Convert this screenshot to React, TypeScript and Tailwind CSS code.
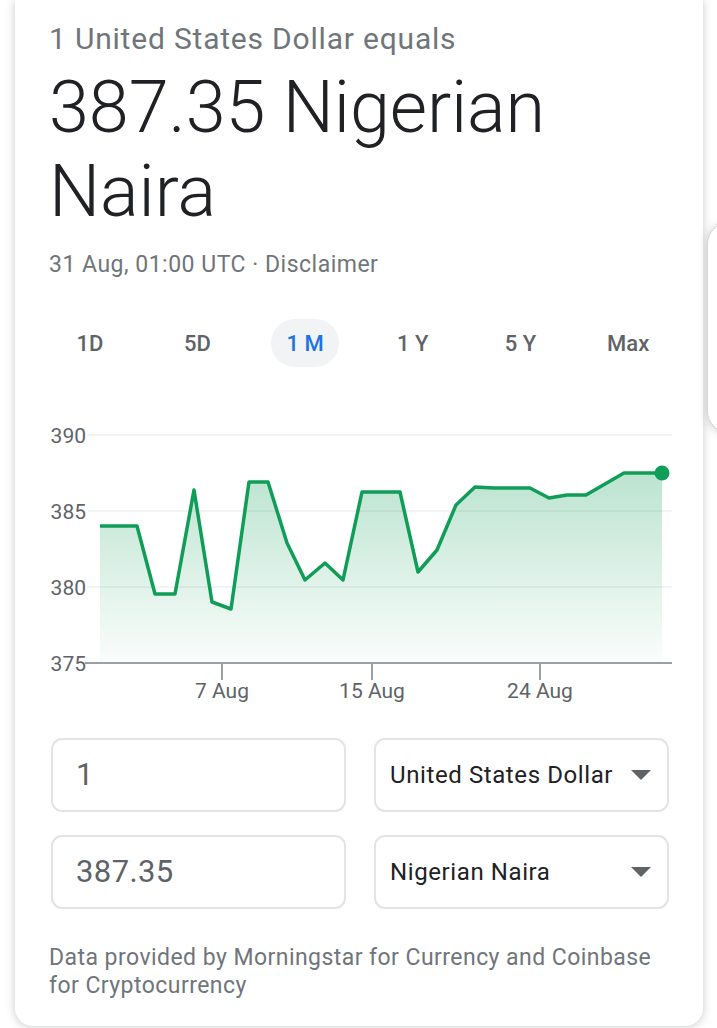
import React from "react";

const ranges = ["1D", "5D", "1 M", "1 Y", "5 Y", "Max"];

const points: [number, number][] = [
  [100, 526], [137, 526], [155, 594], [175, 594], [194, 490], [212, 602],
  [231, 609], [249, 482], [268, 482], [287, 543], [305, 580], [325, 563],
  [343, 580], [362, 492], [400, 492], [418, 572], [437, 550], [456, 505],
  [475, 487], [494, 488], [530, 488], [549, 498], [567, 495], [586, 495],
  [624, 473], [662, 473],
];

function Chart() {
  const line = points.map((p) => p.join(",")).join(" ");
  const area = `${line} 662,663 100,663`;
  return (
    <svg width="688" height="300" viewBox="15 410 688 300" className="block">
      <defs>
        <linearGradient id="fill" x1="0" y1="0" x2="0" y2="1">
          <stop offset="0%" stopColor="#0f9d58" stopOpacity="0.28" />
          <stop offset="100%" stopColor="#0f9d58" stopOpacity="0.02" />
        </linearGradient>
      </defs>
      {[435, 511, 587].map((y) => (
        <line key={y} x1="88" x2="672" y1={y} y2={y} stroke="#f1f3f4" strokeWidth="2" />
      ))}
      <polygon points={area} fill="url(#fill)" />
      <polyline points={line} fill="none" stroke="#0f9d58" strokeWidth="3.5" strokeLinejoin="round" />
      <circle cx="662" cy="473" r="7.5" fill="#0f9d58" />
      <line x1="85" x2="672" y1="663" y2="663" stroke="#9aa0a6" strokeWidth="2" />
      {[222, 372, 540].map((x) => (
        <line key={x} x1={x} x2={x} y1="663" y2="680" stroke="#9aa0a6" strokeWidth="2" />
      ))}
      <g fontFamily="Roboto, sans-serif" fontSize="21" fill="#5f6368">
        <text x="86" y="443" textAnchor="end">390</text>
        <text x="86" y="519" textAnchor="end">385</text>
        <text x="86" y="595" textAnchor="end">380</text>
        <text x="86" y="671" textAnchor="end">375</text>
        <text x="222" y="698" textAnchor="middle">7 Aug</text>
        <text x="372" y="698" textAnchor="middle">15 Aug</text>
        <text x="540" y="698" textAnchor="middle">24 Aug</text>
      </g>
    </svg>
  );
}

function Caret() {
  return (
    <svg width="20" height="10" viewBox="0 0 20 10">
      <polygon points="0,0 20,0 10,10" fill="#5f6368" />
    </svg>
  );
}

export default function App() {
  return (
    <div className="w-[717px] h-[1028px] overflow-hidden bg-white flex items-start font-['Roboto',sans-serif]">
      <div className="shrink-0 w-[688px] h-[1026px] ml-[15px] bg-white rounded-b-[18px] shadow-[0_1px_10px_rgba(60,64,67,0.28)]">
        <div className="pl-[34px] pr-[30px] pt-[20px]">
          <div className="text-[30px] leading-[37px] tracking-[0.8px] text-[#70757a]">1 United States Dollar equals</div>
          <div className="mt-[9px] text-[72px] leading-[84px] tracking-[-0.1px] font-light text-[#202124]">
            387.35 Nigerian Naira
          </div>
          <div className="mt-[17px] text-[23px] leading-[28px] tracking-[0.5px] text-[#70757a]">
            31 Aug, 01:00 UTC · Disclaimer
          </div>
        </div>

        <div className="mt-[40px] px-[21px] grid grid-cols-6">
          {ranges.map((r) => (
            <div key={r} className="flex justify-center">
              <div
                className={
                  r === "1 M"
                    ? "h-[48px] w-[68px] rounded-full bg-[#f1f3f4] flex items-center justify-center text-[22px] font-medium text-[#1a73e8]"
                    : "h-[48px] w-[68px] flex items-center justify-center text-[22px] font-medium text-[#5f6368]"
                }
              >
                {r}
              </div>
            </div>
          ))}
        </div>

        <div className="mt-[43px]">
          <Chart />
        </div>

        <div className="mt-[28px] pl-[36px] pr-[34px] grid grid-cols-2 gap-x-[28px] gap-y-[23px]">
          <div className="h-[74px] rounded-[11px] border-2 border-[#e3e4e6] flex items-center pl-[23px] text-[31px] tracking-[0.4px] text-[#5f6368]">
            1
          </div>
          <div className="h-[74px] rounded-[11px] border-2 border-[#e3e4e6] flex items-center justify-between pl-[14px] pr-[16px] text-[24px] tracking-[0.6px] text-[#202124]">
            <span>United States Dollar</span>
            <Caret />
          </div>
          <div className="h-[74px] rounded-[11px] border-2 border-[#e3e4e6] flex items-center pl-[23px] text-[31px] tracking-[0.4px] text-[#5f6368]">
            387.35
          </div>
          <div className="h-[74px] rounded-[11px] border-2 border-[#e3e4e6] flex items-center justify-between pl-[14px] pr-[16px] text-[24px] tracking-[0.6px] text-[#202124]">
            <span>Nigerian Naira</span>
            <Caret />
          </div>
        </div>

        <div className="mt-[35px] pl-[34px] pr-[30px] text-[23px] leading-[28px] tracking-[0.45px] text-[#70757a]">
          Data provided by Morningstar for Currency and Coinbase for Cryptocurrency
        </div>
      </div>

      <div className="shrink-0 ml-[4px] mt-[222px] w-[120px] h-[211px] bg-white rounded-[22px] border border-[#d7d7d7] shadow-[0_1px_8px_rgba(60,64,67,0.25)]" />
    </div>
  );
}
